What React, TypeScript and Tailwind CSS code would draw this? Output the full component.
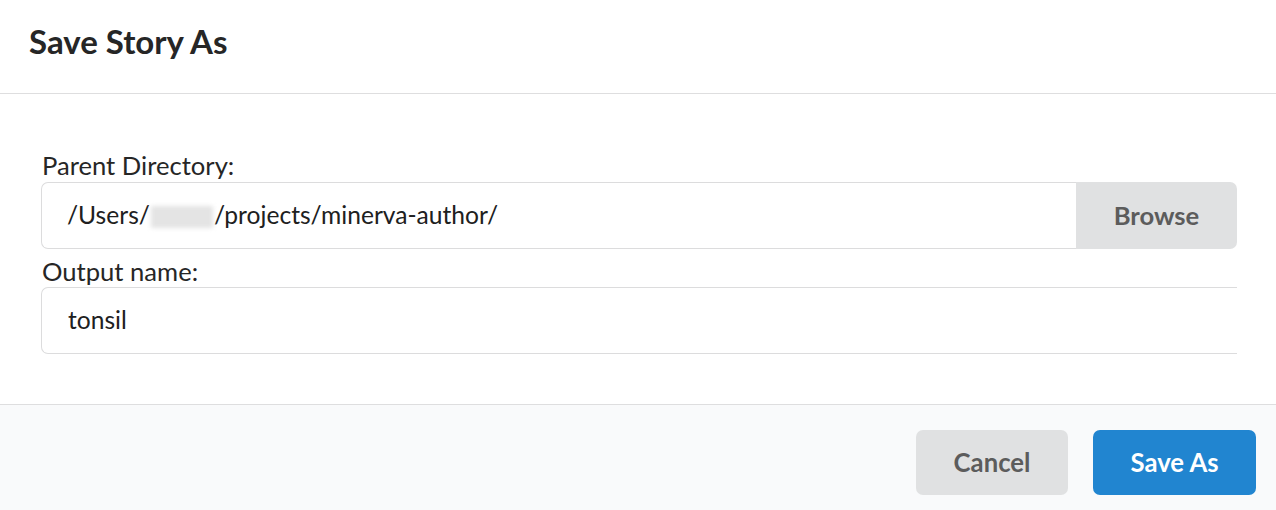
import React from "react";

export default function App() {
  return (
    <div
      className="w-[1276px] h-[510px] bg-white overflow-hidden flex flex-col text-[rgba(0,0,0,0.87)]"
      style={{ fontFamily: "Lato, 'Open Sans', sans-serif" }}
    >
      <div className="h-[94px] shrink-0 border-b border-[#dededf] flex items-center pl-[29px] pb-[10px]">
        <h1 className="text-[33px] font-bold text-[#262626] leading-none">Save Story As</h1>
      </div>
      <div className="h-[310px] shrink-0 pt-[57px] pl-[41px] pr-[39px]">
        <label className="block text-[25.6px] leading-[28px] pl-[1px] text-[#262626]">Parent Directory:</label>
        <div className="mt-[3px] h-[67px] flex">
          <div className="flex-1 border border-r-0 border-[#dcdcdd] rounded-l-[7px] flex items-center pl-[25px] text-[24.6px] text-[#202020]">
            <span>/Users/</span>
            <span className="inline-block w-[62px] h-[22px] bg-[#e4e4e4] blur-[2px] mx-[1px] mt-[2px]"></span>
            <span>/projects/minerva-author/</span>
          </div>
          <button className="w-[161px] bg-[#e0e1e2] rounded-r-[7px] text-[25.6px] font-bold text-[#5c5c5c]">
            Browse
          </button>
        </div>
        <label className="block mt-[8px] text-[25.6px] leading-[28px] pl-[1px] text-[#262626]">Output name:</label>
        <div className="mt-[2px] h-[67px] border border-r-0 border-[#dcdcdd] rounded-l-[7px] flex items-center pl-[26px] text-[24.6px] text-[#202020]">
          tonsil
        </div>
      </div>
      <div className="flex-1 border-t border-[#dededf] bg-[#f9fafb] flex justify-end items-start pt-[25px] pr-[20px] gap-[25px]">
        <button className="w-[152px] h-[65px] bg-[#e0e1e2] rounded-[7px] text-[25.7px] font-bold text-[#5c5c5c]">
          Cancel
        </button>
        <button className="w-[163px] h-[65px] bg-[#2185d0] rounded-[7px] text-[25.7px] font-bold text-white">
          Save As
        </button>
      </div>
    </div>
  );
}
